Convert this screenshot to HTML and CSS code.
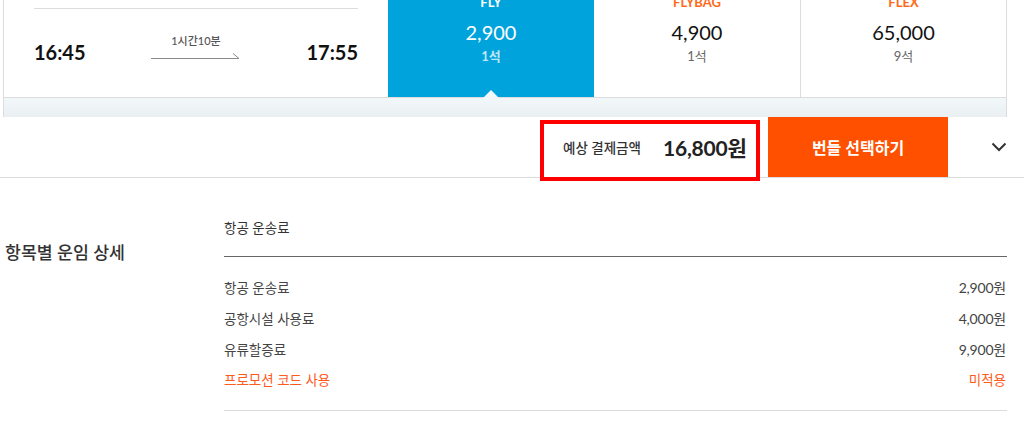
FILE: index.html
```html
<!DOCTYPE html>
<html lang="ko">
<head>
<meta charset="utf-8">
<title>번들 선택</title>
<link rel="stylesheet" href="styles.css">
</head>
<body>
<div class="flight">
  <div class="flight-row">
    <div class="times">
      <div class="times-inner">
        <span class="time">16:45</span>
        <div class="duration">
          <span class="duration-text">1시간10분</span>
          <svg class="arrow" width="90" height="8" viewBox="0 0 90 8"><path d="M0 7.5H88M82 2.5L88 7.5" stroke="#8a8a8a" stroke-width="1" fill="none"/></svg>
        </div>
        <span class="time">17:55</span>
      </div>
    </div>
    <div class="fare selected">
      <span class="fare-label">FLY</span>
      <span class="fare-price">2,900</span>
      <span class="fare-seat">1석</span>
      <span class="notch"></span>
    </div>
    <div class="fare">
      <span class="fare-label">FLYBAG</span>
      <span class="fare-price">4,900</span>
      <span class="fare-seat">1석</span>
    </div>
    <div class="fare divided">
      <span class="fare-label">FLEX</span>
      <span class="fare-price">65,000</span>
      <span class="fare-seat">9석</span>
    </div>
  </div>
  <div class="band"></div>
</div>

<div class="bar">
  <div class="total">
    <span class="total-label">예상 결제금액</span>
    <span class="total-value">16,800원</span>
  </div>
  <button class="select-btn">번들 선택하기</button>
  <div class="toggle">
    <svg width="16" height="10" viewBox="0 0 16 10"><path d="M1.5 1.5L8 8L14.5 1.5" stroke="#333" stroke-width="2" fill="none"/></svg>
  </div>
</div>

<div class="detail">
  <div class="detail-title">항목별 운임 상세</div>
  <div class="detail-body">
    <div class="detail-head">항공 운송료</div>
    <div class="detail-list">
      <div class="detail-row"><span>항공 운송료</span><span class="num">2,900원</span></div>
      <div class="detail-row"><span>공항시설 사용료</span><span class="num">4,000원</span></div>
      <div class="detail-row"><span>유류할증료</span><span class="num">9,900원</span></div>
      <div class="detail-row promo"><span>프로모션 코드 사용</span><span>미적용</span></div>
    </div>
  </div>
</div>
</body>
</html>
```

FILE: styles.css
```css
* { box-sizing: border-box; }
body {
  margin: 0;
  background: #fff;
  font-family: Lato, "Noto Sans CJK KR", sans-serif;
  color: #333;
  overflow: hidden;
}
.flight {
  margin-top: -20px;
  margin-left: 3px;
  width: 1004px;
  border-left: 1px solid #dcdcdc;
  border-right: 1px solid #dcdcdc;
}
.flight-row {
  display: flex;
  height: 118px;
  border-bottom: 1px solid #dcdcdc;
}
.times {
  width: 384px;
  padding: 28px 30px 0 30px;
}
.times-inner {
  border-top: 1px solid #dcdcdc;
  height: 89px;
  display: flex;
  align-items: center;
  justify-content: space-between;
}
.time {
  font-size: 20px;
  font-weight: 700;
  color: #111;
  line-height: 24px;
  margin-top: -2px;
}
.duration {
  display: flex;
  flex-direction: column;
  align-items: center;
  width: 90px;
  margin-top: -14px;
}
.duration-text {
  font-size: 11px;
  line-height: 14px;
  color: #555;
  font-weight: 500;
  margin-bottom: 3px;
}
.arrow { display: block; }
.fare {
  width: 206px;
  display: flex;
  flex-direction: column;
  align-items: center;
  padding-top: 13px;
  position: relative;
  background: #fff;
}
.fare.divided { border-left: 1px solid #dcdcdc; }
.fare-label {
  font-size: 13px;
  font-weight: 700;
  line-height: 18px;
  color: #ff6a1a;
}
.fare-price {
  margin-top: 8px;
  font-size: 20px;
  line-height: 26px;
  color: #111;
}
.fare-seat {
  margin-top: 2px;
  font-size: 13px;
  line-height: 18px;
  color: #666;
}
.fare.selected { background: #00a3dc; }
.fare.selected .fare-label,
.fare.selected .fare-price { color: #fff; }
.fare.selected .fare-seat { color: #bfe6f5; font-weight: 700; }
.notch {
  position: absolute;
  left: 50%;
  bottom: -1px;
  margin-left: -8px;
  width: 0;
  height: 0;
  border-left: 8px solid transparent;
  border-right: 8px solid transparent;
  border-bottom: 8px solid #f2f7fa;
}
.band {
  height: 19px;
  background: linear-gradient(#f2f7fa, #e9eff2);
}
.bar {
  height: 61px;
  border-bottom: 1px solid #dcdcdc;
  display: flex;
  justify-content: flex-end;
  align-items: stretch;
}
.total {
  position: relative;
  width: 220px;
  display: flex;
  align-items: center;
  padding-left: 23px;
  margin-right: 8px;
}
.total::after {
  content: "";
  position: absolute;
  left: 0;
  right: 0;
  top: 3px;
  bottom: -4px;
  border: 4px solid #ff0000;
}
.total-label {
  font-size: 13.5px;
  color: #333;
  font-weight: 500;
  margin-right: 22px;
}
.total-value {
  font-size: 21px;
  font-weight: 700;
  color: #222;
  letter-spacing: -0.2px;
}
.select-btn {
  width: 180px;
  border: 0;
  margin: 0;
  padding: 0;
  background: #ff5000;
  color: #fff;
  font-family: Lato, "Noto Sans CJK KR", sans-serif;
  font-size: 16px;
  font-weight: 700;
}
.toggle {
  width: 76px;
  display: flex;
  align-items: center;
  justify-content: center;
  padding-left: 26px;
}
.detail {
  display: flex;
}
.detail-title {
  width: 224px;
  padding: 63px 0 0 5px;
  font-size: 17.3px;
  line-height: 24px;
  font-weight: 500;
  color: #333;
}
.detail-body {
  width: 783px;
  padding-top: 40px;
}
.detail-head {
  font-size: 13.5px;
  line-height: 20px;
  padding-bottom: 18px;
  border-bottom: 1px solid #666;
  color: #333;
}
.detail-list {
  padding: 15px 0 15px;
  border-bottom: 1px solid #dcdcdc;
}
.detail-row {
  display: flex;
  justify-content: space-between;
  height: 30.7px;
  align-items: center;
  font-size: 13.5px;
  color: #444;
  padding-right: 1px;
}
.detail-row .num { font-size: 14px; letter-spacing: -0.2px; }
.detail-row.promo { color: #ff5a1e; }
```
